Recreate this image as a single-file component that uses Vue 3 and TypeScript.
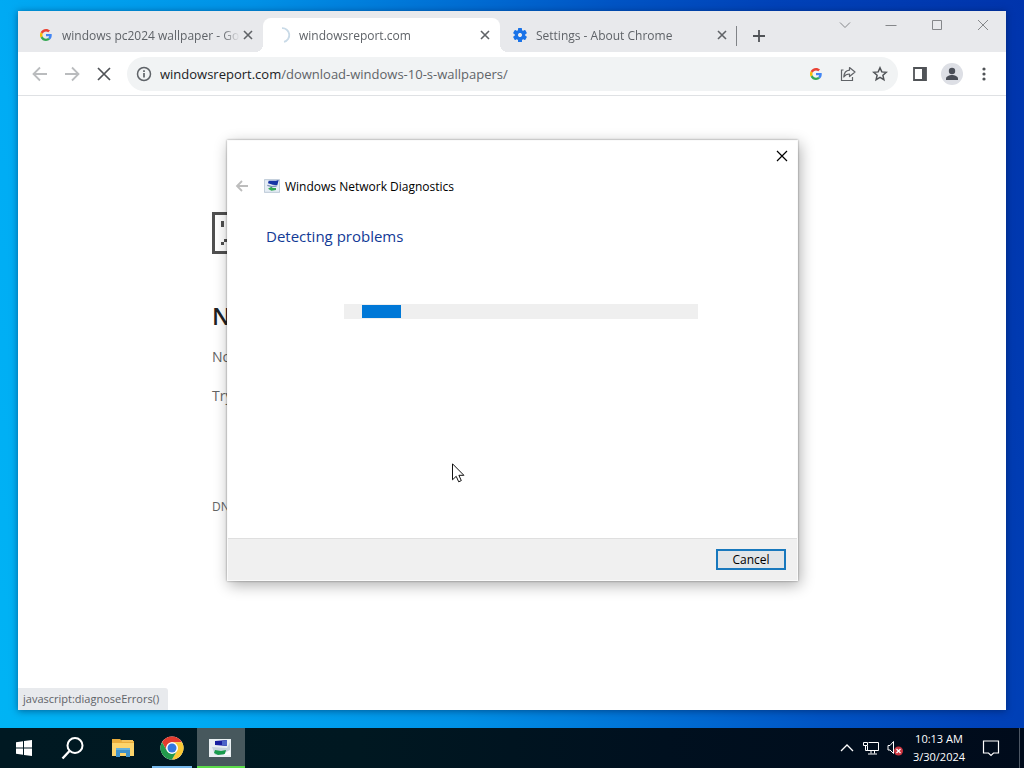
<script setup lang="ts">
import { ref } from 'vue'

interface Tab {
  title: string
  icon: 'google' | 'spinner' | 'gear'
  active: boolean
}

const tabs = ref<Tab[]>([
  { title: 'windows pc2024 wallpaper - Go', icon: 'google', active: false },
  { title: 'windowsreport.com', icon: 'spinner', active: true },
  { title: 'Settings - About Chrome', icon: 'gear', active: false },
])

const progress = { start: 5, size: 11 }
const gearTeeth = [0, 60, 120, 180, 240, 300]
</script>

<template>
  <div class="desktop">
    <main class="browser">
      <header class="strip">
        <div class="tabs">
          <div v-for="tab in tabs" :key="tab.title" class="tab" :class="{ active: tab.active }">
            <svg v-if="tab.icon === 'google'" class="favicon google" viewBox="0 0 48 48">
              <path fill="#ea4335" d="M24 9.500c3.500 0 6.700 1.200 9.200 3.600l6.900-6.900C35.900 2.400 30.500 0 24 0 14.600 0 6.500 5.400 2.600 13.200l8 6.200C12.400 13.700 17.700 9.500 24 9.500z" />
              <path fill="#4285f4" d="M47 24.600c0-1.600-.2-3.100-.4-4.600H24v9h12.900c-.6 3-2.300 5.500-4.800 7.200l7.700 6C44.300 38 47 31.900 47 24.600z" />
              <path fill="#fbbc05" d="M10.500 28.600a14.500 14.500 0 0 1 0-9.200l-8-6.200a24 24 0 0 0 0 21.600z" />
              <path fill="#34a853" d="M24 48c6.500 0 11.900-2.100 15.900-5.800l-7.700-6c-2.200 1.500-4.900 2.300-8.200 2.300-6.300 0-11.600-4.200-13.500-9.900l-8 6.200C6.500 42.600 14.600 48 24 48z" />
            </svg>
            <svg v-else-if="tab.icon === 'spinner'" class="favicon" viewBox="0 0 16 16">
              <path d="M7 1.200A6.900 6.900 0 0 1 9 14.800" fill="none" stroke="#c9dae7" stroke-width="1.800" />
            </svg>
            <svg v-else class="favicon" viewBox="0 0 16 16">
              <g fill="#1a73e8">
                <rect v-for="a in gearTeeth" :key="a" x="6" y="1" width="4" height="5" rx="0.600" :transform="`rotate(${a} 8 8)`" />
              </g>
              <circle cx="8" cy="8" r="3.800" fill="none" stroke="#1a73e8" stroke-width="3" />
            </svg>
            <span class="tab-title">{{ tab.title }}</span>
            <button class="tab-close" aria-label="Close tab">
              <svg width="10" height="10" viewBox="0 0 10 10"><path d="M1 1l8 8M9 1L1 9" stroke="#606367" stroke-width="1.600" /></svg>
            </button>
          </div>
          <button class="new-tab" aria-label="New tab">
            <svg width="12" height="12" viewBox="0 0 12 12"><path d="M6 0v12M0 6h12" stroke="#505357" stroke-width="1.800" /></svg>
          </button>
        </div>
        <div class="controls">
          <button aria-label="Search tabs"><svg width="12" height="12" viewBox="0 0 12 12"><path d="M1 3.500l5 5 5-5" /></svg></button>
          <button aria-label="Minimize"><svg width="12" height="12" viewBox="0 0 12 12"><path d="M0.500 6.500h11" /></svg></button>
          <button aria-label="Maximize"><svg width="12" height="12" viewBox="0 0 12 12"><path d="M1.500 1.500h9v9h-9z" /></svg></button>
          <button aria-label="Close"><svg width="12" height="12" viewBox="0 0 12 12"><path d="M1 1l10 10M11 1L1 11" /></svg></button>
        </div>
      </header>

      <nav class="toolbar">
        <button class="tool" aria-label="Back">
          <svg width="16" height="16" viewBox="0 0 16 16"><path d="M15 8H2M8 1.500L1.500 8 8 14.500" fill="none" stroke="#babcbe" stroke-width="1.800" /></svg>
        </button>
        <button class="tool" aria-label="Forward">
          <svg width="16" height="16" viewBox="0 0 16 16"><path d="M1 8h13M8 1.500L14.500 8 8 14.500" fill="none" stroke="#babcbe" stroke-width="1.800" /></svg>
        </button>
        <button class="tool" aria-label="Stop loading">
          <svg width="14" height="14" viewBox="0 0 14 14"><path d="M1 1l12 12M13 1L1 13" stroke="#505357" stroke-width="1.700" /></svg>
        </button>
        <div class="omnibox">
          <button class="info" aria-label="Site information">
            <svg width="16" height="16" viewBox="0 0 16 16"><circle cx="8" cy="8" r="6.500" fill="none" stroke="#5f6368" stroke-width="1.500" /><path d="M8 7v4.500M8 4.300v1.700" stroke="#5f6368" stroke-width="1.700" /></svg>
          </button>
          <a class="url" href="#"><span class="host">windowsreport.com</span>/download-windows-10-s-wallpapers/</a>
          <button class="tool" aria-label="Search with Google">
            <svg width="12" height="12" viewBox="0 0 48 48">
              <path fill="#ea4335" d="M24 9.500c3.500 0 6.700 1.200 9.200 3.600l6.900-6.900C35.900 2.400 30.500 0 24 0 14.600 0 6.500 5.400 2.600 13.200l8 6.200C12.400 13.700 17.700 9.500 24 9.500z" />
              <path fill="#4285f4" d="M47 24.600c0-1.600-.2-3.100-.4-4.600H24v9h12.900c-.6 3-2.300 5.500-4.800 7.200l7.700 6C44.300 38 47 31.900 47 24.600z" />
              <path fill="#fbbc05" d="M10.500 28.600a14.500 14.500 0 0 1 0-9.200l-8-6.200a24 24 0 0 0 0 21.600z" />
              <path fill="#34a853" d="M24 48c6.500 0 11.900-2.100 15.900-5.800l-7.700-6c-2.200 1.500-4.900 2.300-8.200 2.300-6.300 0-11.600-4.200-13.500-9.900l-8 6.200C6.500 42.600 14.600 48 24 48z" />
            </svg>
          </button>
          <button class="tool" aria-label="Share">
            <svg width="16" height="16" viewBox="0 0 16 16" fill="none" stroke="#606367" stroke-width="1.200"><path d="M3.500 4H1.500v10.500h11V11" /><path d="M9.500 1.500l5.500 4.500-5.500 4.500V8C6.500 8 5 9 3.800 11 4 7.500 6 4.500 9.500 4.200z" stroke-linejoin="round" /></svg>
          </button>
          <button class="tool" aria-label="Bookmark this tab">
            <svg width="16" height="16" viewBox="0 0 16 16"><path d="M8 1.800l1.800 4.100 4.500.4-3.400 3 1 4.400L8 11.400l-3.900 2.300 1-4.400-3.400-3 4.500-.4z" fill="none" stroke="#505357" stroke-width="1.500" /></svg>
          </button>
        </div>
        <button class="tool" aria-label="Side panel">
          <svg width="14" height="14" viewBox="0 0 14 14"><path d="M1 1h12v12H1z" fill="none" stroke="#505357" stroke-width="1.800" /><path d="M9 1h4v12H9z" fill="#505357" /></svg>
        </button>
        <button class="tool" aria-label="Profile">
          <svg width="22" height="22" viewBox="0 0 22 22"><circle cx="11" cy="11" r="11" fill="#dddfe5" /><circle cx="11" cy="8" r="3.200" fill="#4a4e57" /><path d="M5 17v-1.500c0-2.300 3.500-3.500 6-3.500s6 1.200 6 3.500V17z" fill="#4a4e57" /></svg>
        </button>
        <button class="tool" aria-label="Menu">
          <svg width="4" height="14" viewBox="0 0 4 14" fill="#505357"><circle cx="2" cy="2" r="1.600" /><circle cx="2" cy="7" r="1.600" /><circle cx="2" cy="12" r="1.600" /></svg>
        </button>
      </nav>

      <section class="page">
        <svg class="sad" width="42" height="42" viewBox="0 0 42 42" shape-rendering="crispEdges">
          <path d="M1.500 1.500h39v39h-39z" fill="none" stroke="#505050" stroke-width="3" />
          <path d="M9 9h3v6H9zM9 30h3v3H9zM12 27h3v3h-3z" fill="#505050" />
        </svg>
        <h1>N</h1>
        <p>No</p>
        <p>Try</p>
        <p class="code">DN</p>
      </section>
      <div class="status">javascript:diagnoseErrors()</div>
    </main>

    <section class="dialog" role="dialog" aria-labelledby="dialog-title">
      <div class="dialog-top">
        <button class="dialog-close" aria-label="Close">
          <svg width="12" height="12" viewBox="0 0 12 12"><path d="M1 1l10 10M11 1L1 11" stroke="#000" stroke-width="1.200" /></svg>
        </button>
      </div>
      <div class="dialog-title">
        <button class="dialog-back" aria-label="Back">
          <svg width="14" height="12" viewBox="0 0 14 12"><path d="M13 6H2M7 1L2 6l5 5" fill="none" stroke="#bdbdbd" stroke-width="1.800" /></svg>
        </button>
        <svg width="16" height="14" viewBox="0 0 24 20">
          <path d="M0.500 0.500h23v19H.5z" fill="#e6edf5" stroke="#9fb0c2" />
          <path d="M7 2h11l4-1-2 8-7-1-7-2z" fill="#1735a5" />
          <path d="M5 9l7 2 7-1" fill="none" stroke="#7e91ba" stroke-width="2" />
          <path d="M6 14l5-3 2 2h5v3l-7 1z" fill="#31a753" />
        </svg>
        <span id="dialog-title">Windows Network Diagnostics</span>
      </div>
      <div class="dialog-body">
        <h2>Detecting problems</h2>
        <div class="track" role="progressbar" aria-label="Detecting problems">
          <div class="chunk" :style="{ marginLeft: progress.start + '%', width: progress.size + '%' }"></div>
        </div>
      </div>
      <footer class="dialog-foot"><button class="cancel">Cancel</button></footer>
    </section>

    <svg class="pointer" width="13" height="20" viewBox="0 0 13 20">
      <path d="M0.500 0.800v16l3.700-3.500 2.500 5.500 2.600-1.200-2.400-5.300h5z" fill="#fff" stroke="#111" />
    </svg>

    <footer class="taskbar">
      <button class="task" aria-label="Start">
        <svg width="16" height="16" viewBox="0 0 16 16" fill="#fff"><path d="M0 2.200l7-1v6.300H0zM8 1l8-1v7.500H8zM0 8.500h7v6.300l-7-1zM8 8.500h8V16l-8-1z" /></svg>
      </button>
      <button class="task" aria-label="Search">
        <svg width="24" height="24" viewBox="0 0 24 24" fill="none" stroke="#fff" stroke-width="2"><circle cx="14" cy="9.500" r="7.500" /><path d="M8.500 15l-7 7.500" stroke-width="2.400" /></svg>
      </button>
      <button class="task shifted" aria-label="File Explorer">
        <svg width="22" height="20" viewBox="0 0 22 20"><path d="M0 1h8l2 2h12v15H0z" fill="#e9ad3c" /><path d="M0 5h22v13H0z" fill="#fcd46c" /><path d="M9 2h12v2H10z" fill="#f4c25b" /><path d="M4 10h14v9h-4v-4H8v4H4z" fill="#3f92cb" /><path d="M4 10h14v2H4z" fill="#65b1dc" /></svg>
      </button>
      <button class="task shifted running" aria-label="Google Chrome">
        <svg width="24" height="24" viewBox="0 0 48 48">
          <circle cx="24" cy="24" r="23" fill="#fff" />
          <path d="M4.080 12.500A23 23 0 0 1 43.920 12.500H24A11.500 11.500 0 0 0 14.040 29.750z" fill="#e33b2e" />
          <path d="M43.920 12.500A23 23 0 0 1 24 47L33.960 29.750A11.500 11.500 0 0 0 24 12.500z" fill="#fcc934" />
          <path d="M24 47A23 23 0 0 1 4.080 12.500L14.040 29.750A11.500 11.500 0 0 0 33.960 29.750z" fill="#229a4c" />
          <circle cx="24" cy="24" r="11.500" fill="#fff" /><circle cx="24" cy="24" r="9" fill="#3478df" />
        </svg>
      </button>
      <button class="task current" aria-label="Windows Network Diagnostics">
        <svg width="22" height="20" viewBox="0 0 22 20">
          <path d="M0 1h22v18H0z" fill="#e9eff2" />
          <path d="M6 3l12-1v6L6 7z" fill="#181f9f" /><path d="M13 3l5-1v6l-5-1z" fill="#4b64c8" />
          <path d="M3 9l15 1 3-6v9l-7 4H6z" fill="#c6d3dc" />
          <path d="M6 12l6 1 5-1-1 4-7 1-4-2z" fill="#189b4c" /><path d="M17 14l4-2v5h-6z" fill="#f9fafb" />
        </svg>
      </button>
      <div class="tray">
        <button class="tray-icon" aria-label="Show hidden icons"><svg width="14" height="8" viewBox="0 0 14 8"><path d="M1 7l6-6 6 6" fill="none" stroke="#fff" stroke-width="1.300" /></svg></button>
        <button class="tray-icon" aria-label="Network">
          <svg width="16" height="14" viewBox="0 0 16 14" fill="none" stroke="#fff"><path d="M5.500 1.500h10v8h-11V5M8 9.500v3M11.500 9.500v3M5 13h9" /><path d="M0.500 1.500h4v3h-4zM2.500 4.500v5h3" /></svg>
        </button>
        <button class="tray-icon" aria-label="Volume muted">
          <svg width="16" height="16" viewBox="0 0 16 16"><path d="M1 5.500h2l3.500-4v12l-3.500-3.500H1z" fill="none" stroke="#fff" /><circle cx="11.500" cy="11" r="4.500" fill="#cb3540" /><path d="M9.500 9l4 4M13.500 9l-4 4" stroke="#fff" stroke-width="1.200" /></svg>
        </button>
        <button class="clock"><span>10:13 AM</span><span>3/30/2024</span></button>
        <button class="notify" aria-label="Notifications">
          <svg width="18" height="17" viewBox="0 0 18 17"><path d="M1.500 1h15v12h-5L9 15.500 6.500 13h-5z" fill="none" stroke="#fff" stroke-width="1.200" /></svg>
        </button>
        <button class="peek" aria-label="Show desktop"></button>
      </div>
    </footer>
  </div>
</template>

<style>
html, body { margin: 0; height: 100%; }
#app { height: 100%; }
</style>

<style scoped>
* { box-sizing: border-box; }
.desktop {
  position: relative;
  height: 100vh;
  overflow: hidden;
  display: flex;
  flex-direction: column;
  background: linear-gradient(74deg, #00b4f4 0%, #00acf4 16%, #0091e6 38%, #0069d1 57%, #0054c4 67%, #0042b8 80%, #0034ac 100%);
  font-family: "Open Sans", "Noto Sans", sans-serif;
  font-size: 12px;
}
button { border: 0; margin: 0; padding: 0; background: none; color: inherit; font: inherit; display: flex; align-items: center; justify-content: center; flex-shrink: 0; }
svg { display: block; flex-shrink: 0; }

.browser {
  position: relative;
  flex: 1;
  min-height: 0;
  margin: 11px 18px 18px;
  background: #fff;
  display: flex;
  flex-direction: column;
  box-shadow: 0 1px 7px rgba(0, 20, 60, 0.5);
}
.strip { display: flex; justify-content: space-between; height: 41px; background: #e8e9ec; }
.tabs { display: flex; align-items: flex-end; padding-left: 8px; min-width: 0; }
.tab { width: 237px; height: 34px; display: flex; align-items: center; padding: 0 7px 0 12px; border-radius: 8px 8px 0 0; color: #5f6368; position: relative; }
.tab.active { background: #fff; }
.tab.active::before, .tab.active::after { content: ""; position: absolute; bottom: 0; width: 8px; height: 8px; }
.tab.active::before { left: -8px; background: radial-gradient(circle at 0 0, transparent 8px, #fff 8px); }
.tab.active::after { right: -8px; background: radial-gradient(circle at 100% 0, transparent 8px, #fff 8px); }
.favicon { width: 16px; height: 16px; margin-right: 8px; }
.google { padding: 2px; }
.tab-title { flex: 1; min-width: 0; white-space: nowrap; mask-image: linear-gradient(90deg, #000 160px, transparent 178px); }
.tab-close { width: 16px; height: 16px; }
.new-tab { width: 44px; height: 20px; margin: 0 0 6px -1px; border-left: 1px solid #808387; }
.controls { display: flex; align-items: flex-start; }
.controls button { width: 46px; height: 28px; }
.controls path { fill: none; stroke: #85878a; }

.toolbar { display: flex; align-items: center; height: 44px; padding: 0 6px; border-bottom: 1px solid #dfe1e4; }
.tool { width: 32px; height: 32px; }
.omnibox { flex: 1; min-width: 0; display: flex; align-items: center; height: 34px; margin: 0 6px 0 7px; padding: 0 2px 0 9px; border-radius: 17px; background: #f1f3f4; }
.info { width: 16px; height: 16px; margin-right: 8px; }
.url { flex: 1; min-width: 0; color: #5f6368; text-decoration: none; font-size: 13px; white-space: nowrap; overflow: hidden; }
.host { color: #202124; }

.page { flex: 1; padding: 116px 194px 0; color: #646464; font-size: 14px; }
.sad { margin-bottom: 44px; }
.page h1 { margin: 0 0 11px; font-size: 24px; line-height: 36px; font-weight: 600; color: #202124; }
.page p { margin: 0 0 15px; line-height: 24px; }
.page .code { font-size: 12px; margin-top: 87px; }
.status { position: absolute; left: 0; bottom: 0; height: 22px; line-height: 22px; padding: 0 9px 0 5px; font-size: 11px; background: #e8eaed; color: #5f6368; border-radius: 0 3px 0 0; }

.dialog {
  position: absolute;
  left: 227px;
  right: 226px;
  top: 140px;
  bottom: 187px;
  display: flex;
  flex-direction: column;
  background: #fff;
  border: 1px solid #fafafa;
  box-shadow: 0 0 2px rgba(0, 0, 0, 0.4), 2px 4px 14px rgba(0, 0, 0, 0.32);
}
.dialog-top { display: flex; justify-content: flex-end; height: 30px; }
.dialog-close { width: 30px; height: 30px; }
.dialog-title { display: flex; align-items: center; height: 30px; padding-left: 7px; color: #000; }
.dialog-back { width: 14px; height: 16px; margin-right: 15px; }
.dialog-title span { margin-left: 5px; }
.dialog-body { flex: 1; padding: 22px 99px 0 38px; }
.dialog-body h2 { margin: 0 0 55px; font-size: 15px; line-height: 26px; font-weight: 400; color: #123a96; }
.track { height: 15px; margin-left: 78px; padding: 1px 0; background: #efefef; }
.chunk { height: 13px; background: #0078d7; }
.dialog-foot { display: flex; justify-content: flex-end; align-items: center; height: 42px; padding-right: 11px; background: #f0f0f0; border-top: 1px solid #dfdfdf; }
.cancel { width: 70px; height: 21px; background: #e1e5e8; border: 2px solid #1878bd; color: #000; }
.pointer { position: absolute; left: 452px; top: 463px; }

.taskbar { display: flex; gap: 1px; height: 40px; background: linear-gradient(90deg, #001922 0%, #001821 35%, #00101f 65%, #000b1b 100%); color: #fff; }
.task { width: 48px; height: 40px; position: relative; }
.shifted { padding-left: 2px; }
.running::after, .current::after { content: ""; position: absolute; bottom: 0; height: 2px; }
.running::after { left: 5px; right: 3px; background: #76b9ed; }
.current { background: #47585d; margin-left: 1px; padding-right: 2px; }
.current::after { left: 0; right: 0; background: #5bdc4b; }
.tray { margin-left: auto; display: flex; align-items: center; }
.tray-icon { width: 24px; height: 40px; }
.clock { flex-direction: column; width: 64px; line-height: 18px; font-size: 11px; white-space: nowrap; }
.notify { width: 40px; height: 40px; margin-right: 8px; }
.peek { width: 5px; height: 40px; border-left: 1px solid #4d5764; }
</style>
